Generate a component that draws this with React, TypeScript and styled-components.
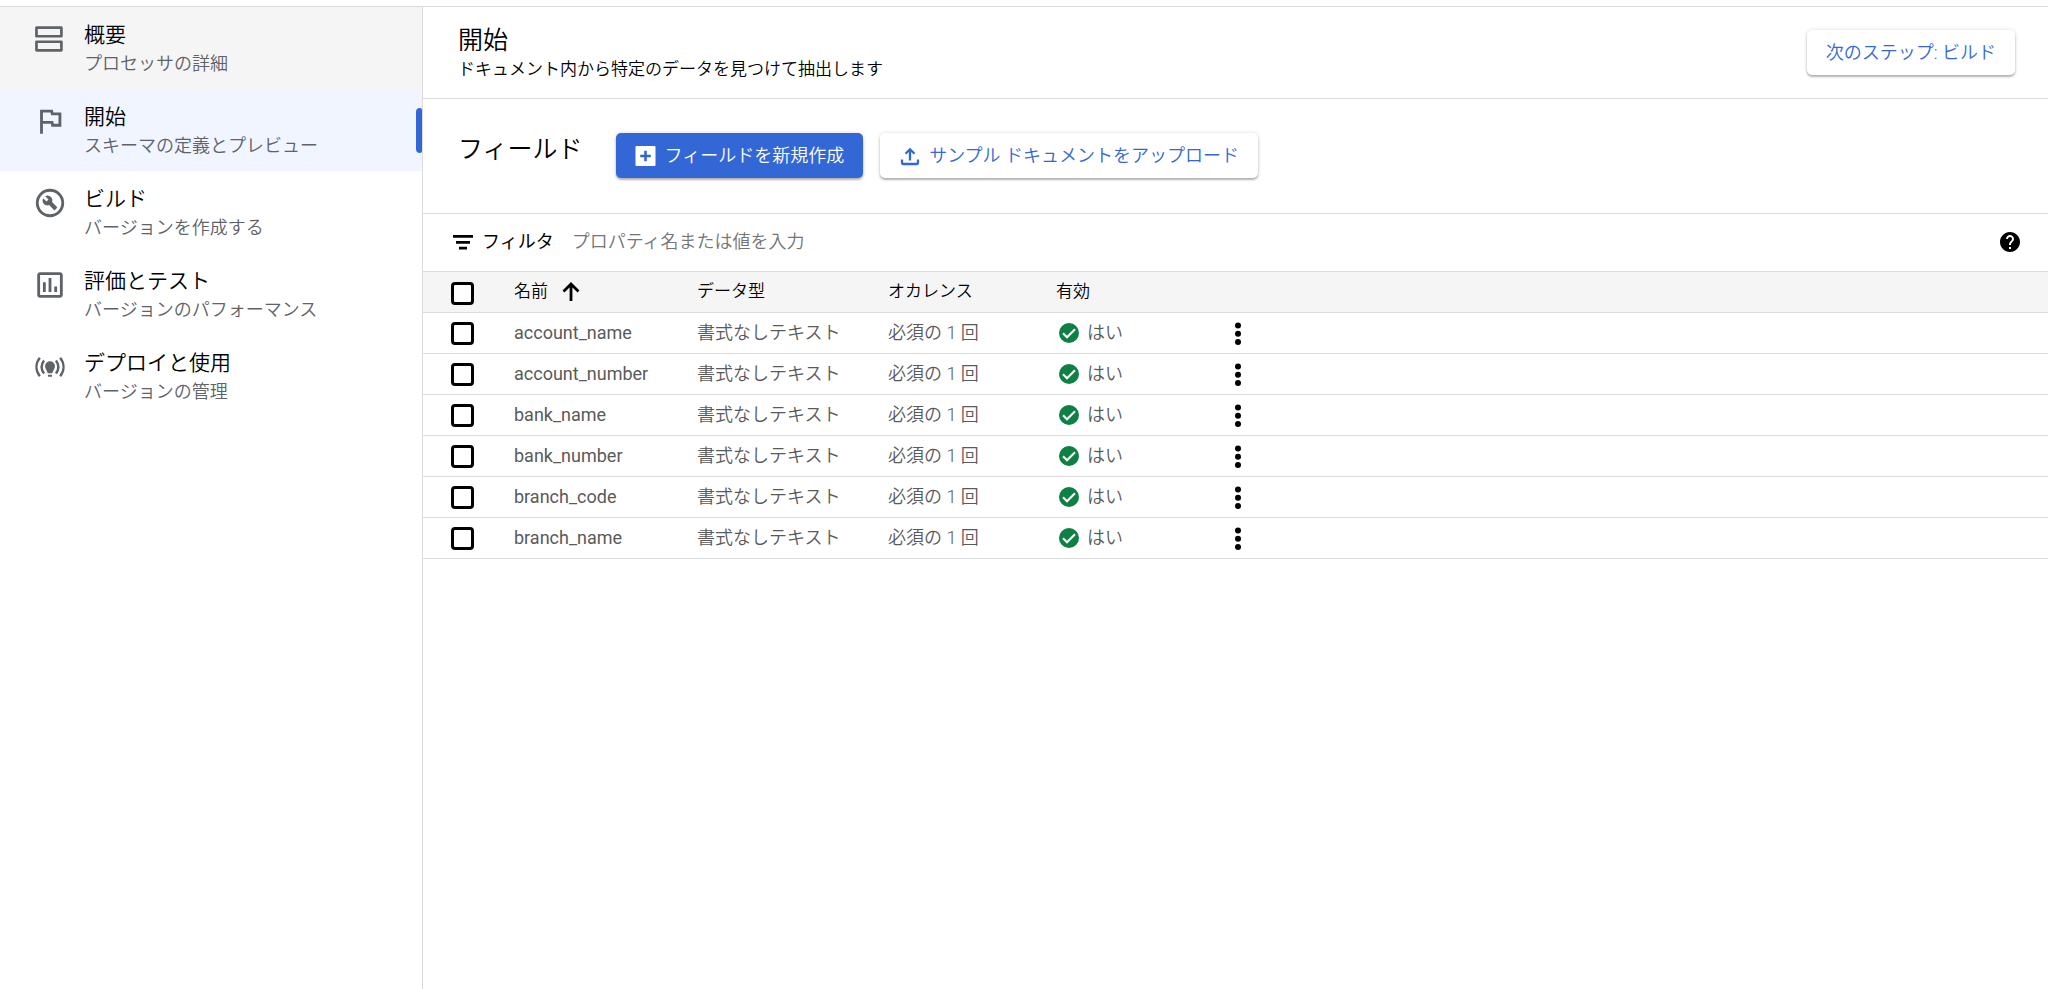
import React from 'react';
import styled, { createGlobalStyle, css } from 'styled-components';

const GlobalStyle = createGlobalStyle`
  *, *::before, *::after { box-sizing: border-box; }
  body {
    margin: 0;
    background: #fff;
    color: #000;
    font-family: Roboto, "Noto Sans CJK JP", sans-serif;
    font-size: 18px;
    line-height: 24px;
  }
  button, input { font: inherit; }
`;

const line = '#dcdcdc';
const blue = '#3367d6';

const Page = styled.div`
  display: flex;
  flex-direction: column;
  min-height: 100vh;
  padding-top: 6px;
`;

const Body = styled.div`
  display: flex;
  flex: 1;
  border-top: 1px solid ${line};
`;

const Sidebar = styled.nav`
  flex: 0 0 423px;
  border-right: 1px solid ${line};
`;

const NavList = styled.ul`
  margin: 0;
  padding: 0;
  list-style: none;
`;

const NavLink = styled.a<{ $state?: 'hover' | 'active' }>`
  position: relative;
  display: flex;
  gap: 17px;
  height: 82px;
  padding: 15px 16px 0 33px;
  color: #5f6368;
  text-decoration: none;
  ${({ $state }) => $state === 'hover' && css`background: #f5f5f5;`}
  ${({ $state }) => $state === 'active' && css`
    background: #f0f5ff;
    &::after {
      content: '';
      position: absolute;
      top: 19px;
      right: 0;
      width: 6px;
      height: 45px;
      border-radius: 4px 2px 2px 4px;
      background: ${blue};
    }
  `}
`;

const NavIcon = styled.svg`
  flex: none;
  width: 34px;
  height: 34px;
  fill: #5f6368;
`;

const NavText = styled.span`
  display: flex;
  flex-direction: column;
`;

const NavTitle = styled.span`
  color: #000;
  font-size: 21px;
  line-height: 26px;
  font-weight: 350;
`;

const NavCaption = styled.span`
  line-height: 32px;
  font-weight: 350;
`;

const Main = styled.main`
  flex: 1;
  min-width: 0;
`;

const Header = styled.header`
  display: flex;
  align-items: center;
  justify-content: space-between;
  height: 92px;
  padding: 0 33px 0 35px;
  border-bottom: 1px solid ${line};
`;

const PageTitle = styled.h1`
  margin: 0;
  font-size: 25px;
  line-height: 32px;
  font-weight: 350;
`;

const PageCaption = styled.p`
  margin: 0;
  font-size: 17px;
  line-height: 24px;
  font-weight: 350;
`;

const Button = styled.button<{ $primary?: boolean }>`
  display: inline-flex;
  align-items: center;
  gap: 8px;
  height: 45px;
  padding: 0 19px;
  border: 0;
  border-radius: 5px;
  background: ${({ $primary }) => ($primary ? blue : '#fff')};
  color: ${({ $primary }) => ($primary ? '#fff' : blue)};
  font-weight: 350;
  white-space: nowrap;
  box-shadow: 0 2px 2px rgba(0, 0, 0, 0.26), 0 0 4px rgba(0, 0, 0, 0.14);
  cursor: pointer;
`;

const ButtonIcon = styled.svg`
  flex: none;
  width: 22px;
  height: 22px;
  fill: currentColor;
`;

const Toolbar = styled.section`
  display: flex;
  align-items: flex-start;
  gap: 17px;
  height: 115px;
  padding: 34px 33px 0 35px;
  border-bottom: 1px solid ${line};
`;

const SectionTitle = styled.h2`
  margin: 0 16px 0 0;
  font-size: 25px;
  line-height: 34px;
  font-weight: 350;
`;

const FilterBar = styled.div`
  display: flex;
  align-items: center;
  height: 58px;
  padding: 0 26px 2px 28px;
  border-bottom: 1px solid ${line};
`;

const FilterLabel = styled.label`
  display: flex;
  align-items: center;
  gap: 7px;
  margin-right: 18px;
  white-space: nowrap;
`;

const FilterInput = styled.input`
  flex: 1;
  min-width: 0;
  padding: 0;
  border: 0;
  outline: 0;
  background: transparent;
  color: #000;
  &::placeholder { color: #757575; opacity: 1; font-weight: 350; }
`;

const IconButton = styled.button`
  display: flex;
  align-items: center;
  justify-content: center;
  width: 24px;
  height: 24px;
  padding: 0;
  border: 0;
  background: none;
  cursor: pointer;
`;

const Table = styled.table`
  width: 100%;
  table-layout: fixed;
  border-collapse: separate;
  border-spacing: 0;
`;

const Col = styled.col<{ $w?: number }>`
  ${({ $w }) => $w && css`width: ${$w}px;`}
`;

const Row = styled.tr<{ $head?: boolean }>`
  height: 41px;
  background: ${({ $head }) => ($head ? '#f5f5f5' : '#fff')};
`;

const HeadCell = styled.th`
  padding: 0 0 2px;
  border-bottom: 1px solid ${line};
  font-size: 17px;
  font-weight: 350;
  text-align: left;
  &:first-child { padding: 2px 0 0 28px; }
`;

const Cell = styled.td`
  padding: 0;
  border-bottom: 1px solid ${line};
  color: #5a5a5a;
  font-weight: 350;
  white-space: nowrap;
  &:first-child { padding-left: 28px; }
`;

const FieldName = styled.span`
  font-weight: 400;
`;

const Checkbox = styled.input`
  appearance: none;
  display: block;
  width: 23px;
  height: 23px;
  margin: 0;
  border: 3px solid #000;
  border-radius: 4px;
  background: #fff;
  cursor: pointer;
`;

const Inline = styled.span<{ $gap: number }>`
  display: flex;
  align-items: center;
  gap: ${({ $gap }) => $gap}px;
`;

const navItems = [
  {
    title: '概要',
    caption: 'プロセッサの詳細',
    state: 'hover' as const,
    icon: <path d="M2.500 3h17.500a1 1 0 0 1 1 1v6a1 1 0 0 1-1 1h-17.500a1 1 0 0 1-1-1v-6a1 1 0 0 1 1-1Zm.9 1.900v4.200h15.700v-4.200ZM2.500 13h17.500a1 1 0 0 1 1 1v6a1 1 0 0 1-1 1h-17.500a1 1 0 0 1-1-1v-6a1 1 0 0 1 1-1Zm.9 1.900v4.200h15.700v-4.200Z" />,
  },
  {
    title: '開始',
    caption: 'スキーマの定義とプレビュー',
    state: 'active' as const,
    icon: <path d="M12.360 6l.4 2H18v6h-3.360l-.4-2H7V6h5.360M14 4H5v17h2v-7h5.600l.4 2h7V6h-5.600L14 4z" />,
  },
  {
    title: 'ビルド',
    caption: 'バージョンを作成する',
    icon: <path fillRule="evenodd" d="M12 2a10 10 0 1 0 0 20 10 10 0 0 0 0-20Zm0 18a8 8 0 1 1 0-16 8 8 0 0 1 0 16ZM13.490 11.380c.43-1.220.17-2.640-.81-3.620a3.470 3.470 0 0 0-4.100-.590l2.350 2.350-1.410 1.410-2.350-2.350c-.71 1.320-.52 2.990.59 4.100.98.98 2.400 1.240 3.620.81l3.410 3.410c.2.2.51.2.71 0l1.400-1.400c.2-.2.2-.51 0-.71l-3.410-3.410Z" />,
  },
  {
    title: '評価とテスト',
    caption: 'バージョンのパフォーマンス',
    icon: <path d="M9 17H7v-7h2v7zm4 0h-2V7h2v10zm4 0h-2v-4h2v4zm2 2H5V5h14v14zm0-16H5c-1.100 0-2 .9-2 2v14c0 1.100.9 2 2 2h14c1.100 0 2-.9 2-2V5c0-1.100-.9-2-2-2z" />,
  },
  {
    title: 'デプロイと使用',
    caption: 'バージョンの管理',
    icon: (
      <>
        <path d="M12 8a3.500 3.500 0 0 0-3.500 3.500c0 1.900 1.300 2.700 1.900 4.900h3.200c.6-2.200 1.900-3 1.900-4.900A3.500 3.500 0 0 0 12 8ZM10.600 17.500h2.800v1.300h-2.800Z" />
        <path
          d="M4.800 5.500c-3.100 4-3.100 9 0 13M7.800 7.400c-2.200 2.900-2.200 6.300 0 9.200M19.200 5.500c3.100 4 3.100 9 0 13M16.200 7.400c2.200 2.900 2.200 6.300 0 9.200"
          fill="none"
          stroke="#5f6368"
          strokeWidth="1.700"
        />
      </>
    ),
  },
];

const fields = ['account_name', 'account_number', 'bank_name', 'bank_number', 'branch_code', 'branch_name'];

export default function App() {
  return (
    <>
      <GlobalStyle />
      <Page>
        <Body>
          <Sidebar>
            <NavList>
              {navItems.map(({ title, caption, state, icon }) => (
                <li key={title}>
                  <NavLink href="#" $state={state} aria-current={state === 'active' ? 'page' : undefined}>
                    <NavIcon viewBox="0 0 24 24" aria-hidden="true">{icon}</NavIcon>
                    <NavText>
                      <NavTitle>{title}</NavTitle>
                      <NavCaption>{caption}</NavCaption>
                    </NavText>
                  </NavLink>
                </li>
              ))}
            </NavList>
          </Sidebar>
          <Main>
            <Header>
              <div>
                <PageTitle>開始</PageTitle>
                <PageCaption>ドキュメント内から特定のデータを見つけて抽出します</PageCaption>
              </div>
              <Button type="button">次のステップ: ビルド</Button>
            </Header>
            <Toolbar>
              <SectionTitle>フィールド</SectionTitle>
              <Button type="button" $primary>
                <ButtonIcon viewBox="0 0 22 22" aria-hidden="true">
                  <path fillRule="evenodd" d="M1.500 1h18a1 1 0 0 1 1 1v18a1 1 0 0 1-1 1h-18a1 1 0 0 1-1-1V2a1 1 0 0 1 1-1Zm7.700 4.800v4H5.200v2.400h4v4h2.600v-4h4V9.800h-4v-4Z" />
                </ButtonIcon>
                フィールドを新規作成
              </Button>
              <Button type="button">
                <ButtonIcon viewBox="0 0 22 22" aria-hidden="true">
                  <path d="M3 14.500V17.500a1.500 1.500 0 0 0 1.500 1.500h13a1.500 1.500 0 0 0 1.500-1.500V14.500M11 15.500V4.500M6.500 8.800 11 4.300l4.500 4.500" fill="none" stroke="currentColor" strokeWidth="2.300" />
                </ButtonIcon>
                サンプル ドキュメントをアップロード
              </Button>
            </Toolbar>
            <FilterBar>
              <FilterLabel htmlFor="filter">
                <svg width="24" height="24" viewBox="0 0 24 24" aria-hidden="true">
                  <path d="M2 5h20v2.800H2ZM5 10.900h14v2.800H5ZM8 16.800h8v2.800H8Z" />
                </svg>
                フィルタ
              </FilterLabel>
              <FilterInput id="filter" type="text" placeholder="プロパティ名または値を入力" />
              <IconButton type="button" aria-label="ヘルプ">
                <svg width="24" height="24" viewBox="0 0 24 24" aria-hidden="true">
                  <path d="M12 2C6.480 2 2 6.480 2 12s4.480 10 10 10 10-4.480 10-10S17.520 2 12 2zm1 17h-2v-2h2v2zm2.070-7.750l-.9.920C13.450 12.900 13 13.500 13 15h-2v-.5c0-1.100.45-2.100 1.170-2.830l1.240-1.260c.37-.36.59-.86.59-1.410 0-1.100-.9-2-2-2s-2 .9-2 2H8c0-2.210 1.790-4 4-4s4 1.790 4 4c0 .88-.36 1.680-.93 2.250z" />
                </svg>
              </IconButton>
            </FilterBar>
            <Table>
              <colgroup>
                <Col $w={91} />
                <Col $w={183} />
                <Col $w={191} />
                <Col $w={168} />
                <Col $w={169} />
                <Col />
              </colgroup>
              <thead>
                <Row $head>
                  <HeadCell><Checkbox type="checkbox" aria-label="すべて選択" /></HeadCell>
                  <HeadCell aria-sort="ascending">
                    <Inline $gap={12}>
                      名前
                      <svg width="22" height="22" viewBox="0 0 22 22" aria-hidden="true">
                        <path d="M11 21V4M3.500 11.500 11 4l7.500 7.500" fill="none" stroke="#000" strokeWidth="2.800" />
                      </svg>
                    </Inline>
                  </HeadCell>
                  <HeadCell>データ型</HeadCell>
                  <HeadCell>オカレンス</HeadCell>
                  <HeadCell>有効</HeadCell>
                  <HeadCell />
                </Row>
              </thead>
              <tbody>
                {fields.map((name) => (
                  <Row key={name}>
                    <Cell><Checkbox type="checkbox" aria-label={name} /></Cell>
                    <Cell><FieldName>{name}</FieldName></Cell>
                    <Cell>書式なしテキスト</Cell>
                    <Cell>必須の 1 回</Cell>
                    <Cell>
                      <Inline $gap={6}>
                        <svg width="25" height="24" viewBox="0 0 25 24" aria-hidden="true">
                          <circle cx="13" cy="12" r="10" fill="#0f8043" />
                          <path d="m7 12.300 4 3.900 8-8" fill="none" stroke="#fff" strokeWidth="2.100" />
                        </svg>
                        はい
                      </Inline>
                    </Cell>
                    <Cell>
                      <IconButton type="button" aria-label={`${name} のメニュー`}>
                        <svg width="24" height="24" viewBox="0 0 24 24" aria-hidden="true">
                          <circle cx="13" cy="4.500" r="3" />
                          <circle cx="13" cy="12.800" r="3" />
                          <circle cx="13" cy="21" r="3" />
                        </svg>
                      </IconButton>
                    </Cell>
                  </Row>
                ))}
              </tbody>
            </Table>
          </Main>
        </Body>
      </Page>
    </>
  );
}
